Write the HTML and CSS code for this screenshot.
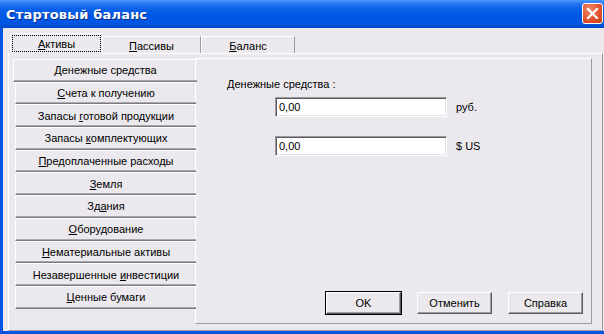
FILE: index.html
```html
<!DOCTYPE html>
<html>
<head>
<meta charset="utf-8">
<link rel="stylesheet" href="styles.css">
</head>
<body>
<div class="window">
  <div class="titlebar">
    <span class="title">Стартовый баланс</span>
    <div class="close">
      <svg width="13" height="13" viewBox="0 0 13 13"><path d="M2 2 L11 11 M11 2 L2 11" stroke="#fff" stroke-width="2.2" stroke-linecap="square"/></svg>
    </div>
  </div>
  <div class="client">
    <div class="tabs">
      <div class="tab active"><span class="focus"><span><u>А</u>ктивы</span></span></div>
      <div class="tab t2"><span><u>П</u>ассивы</span></div>
      <div class="tab t3"><span><u>Б</u>аланс</span></div>
    </div>
    <div class="panel">
      <div class="vtabs">
        <div class="vtab sel"><span><u>Д</u>енежные средства</span></div>
        <div class="vtab"><span><u>С</u>чета к получению</span></div>
        <div class="vtab"><span>Запасы <u>г</u>отовой продукции</span></div>
        <div class="vtab"><span>Запасы <u>к</u>омплектующих</span></div>
        <div class="vtab"><span><u>П</u>редоплаченные расходы</span></div>
        <div class="vtab"><span><u>З</u>емля</span></div>
        <div class="vtab"><span>Зд<u>а</u>ния</span></div>
        <div class="vtab"><span><u>О</u>борудование</span></div>
        <div class="vtab"><span><u>Н</u>ематериальные активы</span></div>
        <div class="vtab"><span>Незавершенные <u>и</u>нвестиции</span></div>
        <div class="vtab"><span><u>Ц</u>енные бумаги</span></div>
      </div>
      <div class="page">
        <div class="label">Денежные средства :</div>
        <div class="row"><div class="edit">0,00</div><span class="unit">руб.</span></div>
        <div class="row r2"><div class="edit">0,00</div><span class="unit">$ US</span></div>
        <div class="buttons">
          <div class="btn default"><span>OK</span></div>
          <div class="btn"><span>Отменить</span></div>
          <div class="btn"><span>Справка</span></div>
        </div>
      </div>
    </div>
  </div>
</div>
</body>
</html>
```

FILE: styles.css
```css
html, body {
  margin: 0;
  padding: 0;
  overflow: hidden;
}
body {
  width: 604px;
  height: 334px;
  font-family: "Liberation Sans", Arial, sans-serif;
  font-size: 11px;
  color: #000;
}
.window {
  width: 604px;
  height: 334px;
  display: flex;
  flex-direction: column;
  background: #0055e5;
}
.titlebar {
  height: 28px;
  flex: none;
  display: flex;
  align-items: center;
  justify-content: space-between;
  background: linear-gradient(#4a98f8 0%, #2b7cf2 12%, #0c62e8 30%, #0058e6 55%, #0056e2 85%, #0047c6 100%);
  padding: 0 1px 0 6px;
}
.title {
  color: #fff;
  font-family: "DejaVu Sans", sans-serif;
  font-weight: bold;
  font-size: 13px;
  letter-spacing: 0.2px;
  text-shadow: 1px 1px 0 #0a2f8a;
}
.close {
  width: 19px;
  height: 19px;
  margin-top: -1px;
  border: 1px solid #fff;
  border-radius: 3px;
  background: radial-gradient(circle at 35% 30%, #f08a68 0%, #e0532b 55%, #c43c16 100%);
  display: flex;
  align-items: center;
  justify-content: center;
}
.client {
  flex: 1;
  margin: 0 0 3px 3px;
  background: #ebe9ed;
  padding: 5px 0 0 5px;
  display: flex;
  flex-direction: column;
}
.tabs {
  display: flex;
  align-items: flex-end;
  height: 20px;
  margin-left: 2px;
  position: relative;
  z-index: 1;
}
.tab {
  height: 17px;
  box-sizing: border-box;
  border-top: 1px solid #fff;
  border-left: 1px solid #fff;
  border-right: 1px solid #9c9a9f;
  display: flex;
  align-items: center;
  justify-content: center;
  padding-top: 1px;
}
.tab.active {
  width: 93px;
  height: 21px;
  margin-bottom: -1px;
  background: #ebe9ed;
  border-right-color: #fff;
  padding: 1px 1px 2px 1px;
}
.tab.t2 { width: 98px; border-left: none; }
.tab.t3 { width: 94px; border-left: 1px solid #fff; }
.focus {
  flex: 1;
  align-self: stretch;
  display: flex;
  align-items: center;
  justify-content: center;
  border: 1px dotted #000;
}
.panel {
  width: 595px;
  height: 278px;
  box-sizing: border-box;
  border-top: 1px solid #fff;
  border-left: 1px solid #fff;
  border-right: 1px solid #9c9a9f;
  border-bottom: 1px solid #9c9a9f;
  padding: 4px 9px 0 4px;
  display: flex;
}
.vtabs {
  width: 183px;
  display: flex;
  flex-direction: column;
  padding-top: 1px;
}
.vtab {
  height: 22.7px;
  box-sizing: border-box;
  margin-left: 2px;
  border-top: 1px solid #fff;
  border-left: 1px solid #fff;
  border-bottom: 1px solid #7d7b80;
  box-shadow: inset 0 -1px #aaa8ad;
  display: flex;
  align-items: center;
  justify-content: center;
  white-space: nowrap;
  position: relative;
  z-index: 1;
}
.vtab.sel {
  margin-left: 0;
  margin-right: -1px;
}
.page {
  width: 397px;
  height: 266px;
  box-sizing: border-box;
  border-top: 1px solid #fff;
  border-left: 1px solid #fff;
  border-right: 1px solid #9c9a9f;
  border-bottom: 1px solid #9c9a9f;
  padding: 18px 0 0 31px;
  display: flex;
  flex-direction: column;
  margin-left: -1px;
}
.label {
  height: 14px;
  line-height: 14px;
}
.row {
  display: flex;
  align-items: center;
  margin-top: 6px;
  margin-left: 48px;
}
.row.r2 { margin-top: 19px; }
.edit {
  width: 172px;
  height: 20px;
  box-sizing: border-box;
  background: #fff;
  border-top: 1px solid #9c9a9f;
  border-left: 1px solid #9c9a9f;
  border-bottom: 1px solid #fff;
  border-right: 1px solid #fff;
  box-shadow: inset 1px 1px #5a595c, inset -1px -1px #e6e4e8;
  padding: 2px 0 0 3px;
  line-height: 15px;
}
.unit {
  margin-left: 9px;
}
.buttons {
  display: flex;
  gap: 16px;
  margin-top: auto;
  margin-bottom: 9px;
  margin-left: 99px;
}
.btn {
  width: 75px;
  height: 22px;
  box-sizing: border-box;
  background: #ebe9ed;
  border-top: 1px solid #fff;
  border-left: 1px solid #fff;
  border-right: 1px solid #5a595c;
  border-bottom: 1px solid #5a595c;
  box-shadow: inset -1px -1px #9c9a9f;
  display: flex;
  align-items: center;
  justify-content: center;
}
.btn.default {
  outline: 1px solid #000;
}
```
